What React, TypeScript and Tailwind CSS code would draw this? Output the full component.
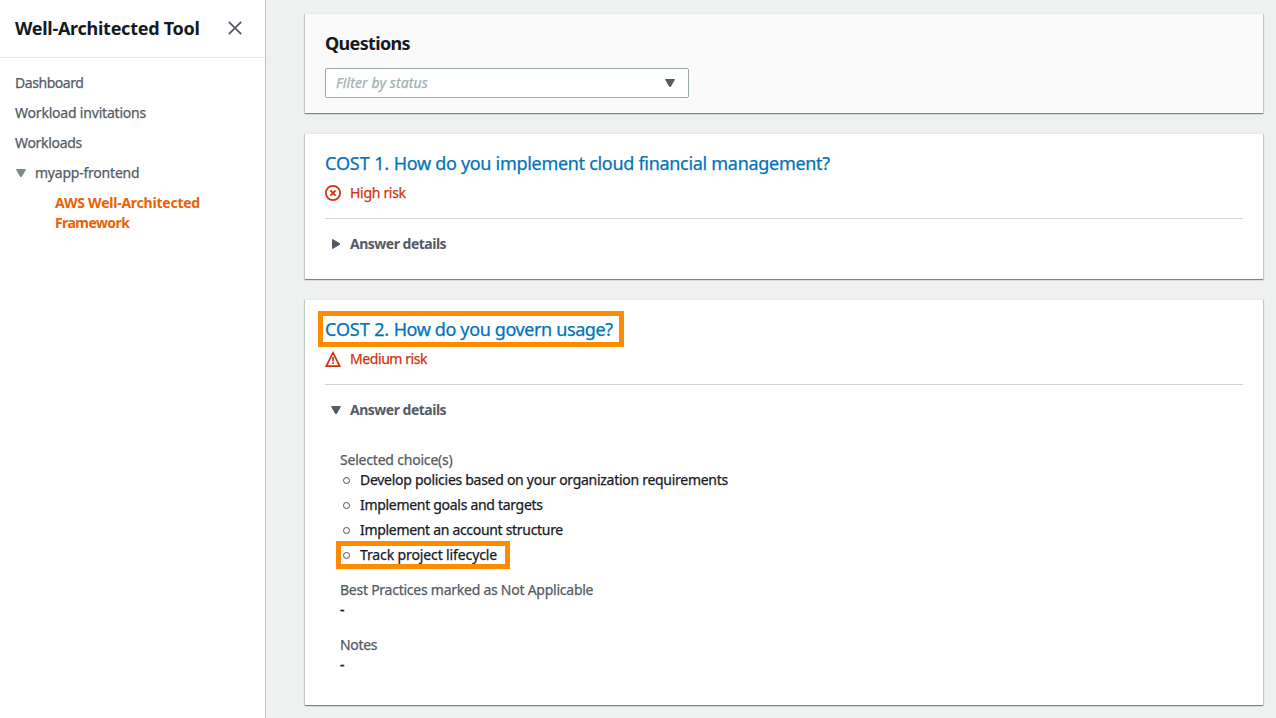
import type { ReactNode } from "react";

const CARD =
  "flex flex-col border-t border-[#e6eae9] px-5 shadow-[0_1px_1px_0_rgba(0,28,36,0.3),1px_1px_1px_0_rgba(0,28,36,0.15),-1px_1px_1px_0_rgba(0,28,36,0.15)]";

function CloseIcon() {
  return (
    <svg width="14" height="14" viewBox="0 0 14 14" className="mb-0.5" fill="none" stroke="#545b64" strokeWidth="1.8">
      <path d="M0.8 0.8 13.2 13.2M13.2 0.8 0.8 13.2" />
    </svg>
  );
}

function CaretDown({ className }: { className: string }) {
  return (
    <svg width="10" height="8" viewBox="0 0 10 8" className={className} fill="currentColor" stroke="currentColor" strokeLinejoin="round">
      <path d="M.5.5h9L5.5 7.5h-1Z" />
    </svg>
  );
}

function CaretRight() {
  return (
    <svg width="8" height="10" viewBox="0 0 8 10" fill="currentColor" stroke="currentColor" strokeLinejoin="round">
      <path d="M.5.5v9L7.5 5.5v-1Z" />
    </svg>
  );
}

function HighRiskIcon() {
  return (
    <svg width="16" height="16" viewBox="0 0 16 16" fill="none" stroke="#d13212" strokeWidth="1.8">
      <circle cx="8" cy="8" r="7.1" />
      <path d="m5.4 5.4 5.2 5.2M10.6 5.4l-5.2 5.2" />
    </svg>
  );
}

function MediumRiskIcon() {
  return (
    <svg width="16" height="16" viewBox="0 0 16 16" fill="none" stroke="#d13212" strokeWidth="1.7">
      <path d="M8 1.7 14.7 15.1H1.3Z" />
      <path d="M8 6v4.2M8 11.2v1.9" />
    </svg>
  );
}

function QuestionHeader({ title, status, children }: { title: ReactNode; status: ReactNode; children: ReactNode }) {
  return (
    <>
      <h3 className="mt-[19px] text-[18px] leading-5 text-[#0073bb]">{title}</h3>
      <div className="mt-[10px] flex h-5 items-center gap-[9px] text-[#d13212]">{status}</div>
      <div className="mt-[15px] h-px bg-[#d0d6d6]" />
      <div className="mt-[15px] flex h-5 items-center font-bold text-[#545b64]">{children}</div>
    </>
  );
}

function Choice({ children }: { children: ReactNode }) {
  return (
    <li className="relative flex h-5 items-center">
      <span className="ml-[3px] mr-[10px] mt-px h-[7px] w-[7px] rounded-full border border-[#4c4f54]" />
      {children}
    </li>
  );
}

export default function App() {
  return (
    <div className="flex h-[718px] w-[1276px] overflow-hidden bg-[#eff1f1] font-['Noto_Sans','Open_Sans',sans-serif] text-[14px] leading-5 text-[#16191f] [-webkit-text-stroke:0.25px]">
      <aside className="flex w-[266px] shrink-0 flex-col border-r border-[#bfc3c4] bg-white">
        <div className="flex h-[58px] items-center justify-between border-b border-[#e6eae9] pl-[15px] pr-[23px]">
          <h1 className="mb-0.5 text-[18px] font-bold tracking-[-0.27px] [-webkit-text-stroke:0px]">Well-Architected Tool</h1>
          <CloseIcon />
        </div>
        <nav className="flex flex-col gap-[10px] pl-[15px] pt-[15px] text-[#545b64]">
          <a className="tracking-[-0.45px]">Dashboard</a>
          <a className="tracking-[-0.2px]">Workload invitations</a>
          <a className="tracking-[-0.3px]">Workloads</a>
          <div className="flex items-center gap-[9px]">
            <CaretDown className="ml-px text-[#7b8a8b]" />
            <a className="tracking-[-0.22px]">myapp-frontend</a>
          </div>
          <a className="flex flex-col pl-10 font-bold text-[#eb5f07] [-webkit-text-stroke:0px]">
            <span className="tracking-[-0.23px]">AWS Well-Architected</span>
            <span className="tracking-[-0.58px]">Framework</span>
          </a>
        </nav>
      </aside>

      <main className="flex flex-1 flex-col gap-5 pl-[39px] pr-[13px] pt-[13px]">
        <section className={`${CARD} h-[100px] shrink-0 bg-[#fafafa]`}>
          <h2 className="mt-[19px] text-[18px] font-bold leading-5 tracking-[-0.67px] [-webkit-text-stroke:0px]">Questions</h2>
          <div className="mt-[15px] flex h-[30px] w-[364px] items-center justify-between rounded-[2px] border border-[#9baaaa] bg-white pl-[10px] pr-[13px]">
            <span className="italic tracking-[0.11px] text-[#a3b1b1]">Filter by status</span>
            <CaretDown className="text-[#545b64]" />
          </div>
        </section>

        <section className={`${CARD} h-[146px] shrink-0 bg-white`}>
          <QuestionHeader
            title={
              <span className="tracking-[-0.3px]">
                <span className="tracking-[-0.1px]">COST 1. </span>How do you implement cloud financial management?
              </span>
            }
            status={
              <>
                <HighRiskIcon />
                <span className="tracking-[-0.3px]">High risk</span>
              </>
            }
          >
            <span className="flex w-[25px] pl-[7px]">
              <CaretRight />
            </span>
            <span className="tracking-[-0.5px] [-webkit-text-stroke:0px]">Answer details</span>
          </QuestionHeader>
        </section>

        <section className={`${CARD} h-[406px] shrink-0 bg-white`}>
          <QuestionHeader
            title={
              <span className="relative tracking-[-0.38px]">
                <span className="tracking-[-0.1px]">COST 2. </span>How do you govern usage?
                <span className="absolute -left-[7px] top-1/2 h-9 w-[306px] -translate-y-1/2 border-[5px] border-[#ff8c00]" />
              </span>
            }
            status={
              <>
                <MediumRiskIcon />
                <span className="tracking-[-0.42px]">Medium risk</span>
              </>
            }
          >
            <span className="flex w-[25px] pl-[6px]">
              <CaretDown className="text-[#545b64]" />
            </span>
            <span className="tracking-[-0.5px] [-webkit-text-stroke:0px]">Answer details</span>
          </QuestionHeader>

          <div className="mt-[30px] flex flex-col pl-[15px] text-[#545b64]">
            <span className="tracking-[-0.2px]">Selected choice(s)</span>
            <ul className="flex flex-col gap-[5px] text-[#16191f]">
              <Choice>
                <span className="tracking-[-0.28px]">Develop policies based on your organization requirements</span>
              </Choice>
              <Choice>
                <span className="tracking-[-0.3px]">Implement goals and targets</span>
              </Choice>
              <Choice>
                <span className="tracking-[-0.31px]">Implement an account structure</span>
              </Choice>
              <Choice>
                <span className="tracking-[-0.12px]">Track project lifecycle</span>
                <span className="absolute -left-1 -top-1 h-7 w-[174px] border-[5px] border-[#ff8c00]" />
              </Choice>
            </ul>
            <span className="mt-[15px] tracking-[-0.25px]">Best Practices marked as Not Applicable</span>
            <span className="font-medium text-[#16191f]">-</span>
            <span className="mt-[15px] tracking-[-0.3px]">Notes</span>
            <span className="font-medium text-[#16191f]">-</span>
          </div>
        </section>
      </main>
    </div>
  );
}
